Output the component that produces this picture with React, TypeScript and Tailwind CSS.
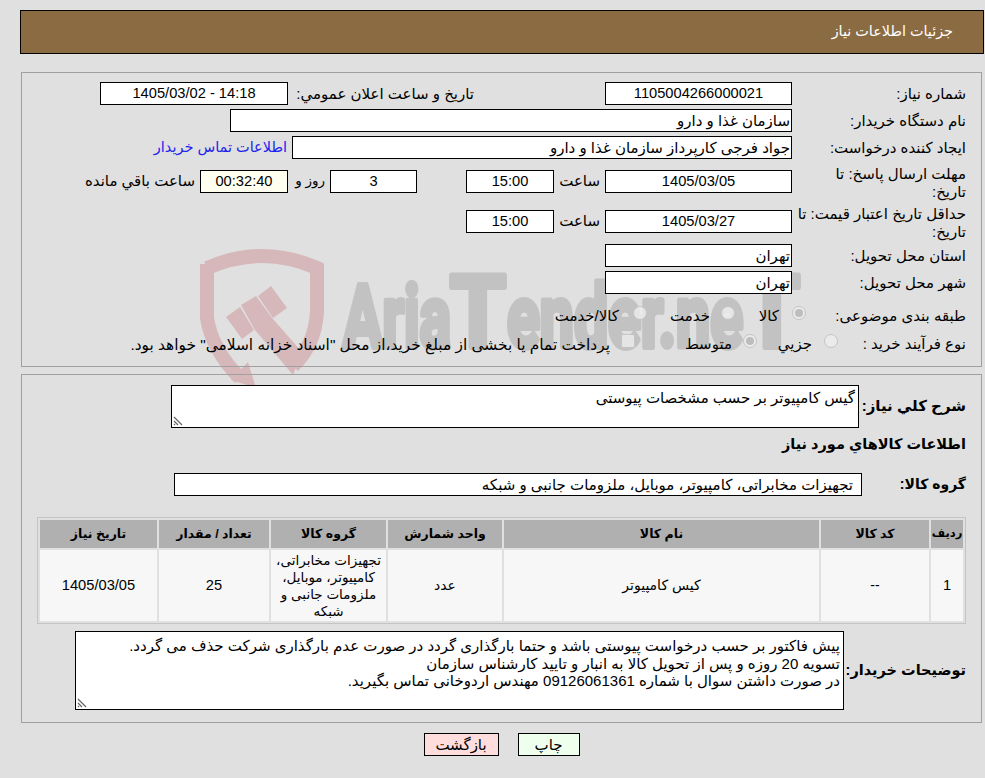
import React from 'react';

const Box = ({ className = '', children }: any) => (
  <div className={`h-[23px] shrink-0 border border-black bg-white flex items-center justify-center text-[14.67px] leading-none ${className}`}>
    {children}
  </div>
);

const TextBox = ({ className = '', children }: any) => (
  <div className={`h-[23px] shrink-0 border border-black bg-white flex items-center px-[1px] text-[15px] leading-none ${className}`}>
    {children}
  </div>
);

const Label = ({ className = 'w-[174px]', children }: any) => (
  <div className={`shrink-0 text-[15px] leading-[18px] ${className}`}>{children}</div>
);

const Hour = () => (
  <span className="mr-[5px] w-[42px] h-[23px] shrink-0 flex items-center text-[15px]">ساعت</span>
);

const Resize = () => (
  <svg className="absolute left-[1px] bottom-[1px]" width="10" height="10" viewBox="0 0 10 10">
    <path d="M1 1 L9 9 M1 5 L5 9 M1 8 L2 9" stroke="#666" strokeWidth="1.2" fill="none" />
  </svg>
);

const Radio = ({ checked }: any) => (
  <span className="w-[14px] h-[14px] shrink-0 -translate-y-[3px] rounded-full border border-[#c4c4c4] bg-[#ededed]/80 flex items-center justify-center">
    {checked && <span className="w-[8px] h-[8px] rounded-full bg-[#bdbdbd]" />}
  </span>
);

const Watermark = () => (
  <svg className="absolute left-0 top-0 [direction:ltr]" width="985" height="778" viewBox="0 0 985 778">
    <g fill="#d7b8ba">
      <path d="M207 268 Q262 244 317 268 L317 312 Q315 345 293 366" fill="none" stroke="#d7b8ba" strokeWidth="14" />
      <path d="M207 264 L207 318 Q212 350 240 378" fill="none" stroke="#d7b8ba" strokeWidth="14" />
      <polygon points="248,362 256,388 231,380" />
      <polygon points="271,286 287,308 273,318 258,296" />
      <polygon points="241,305 256,296 273,319 302,352 293,375 255,330" />
      <polygon points="226,317 240,307 254,330 242,339" />
    </g>
    <g fill="#c2c2c2" stroke="#c2c2c2" strokeWidth="6" strokeLinejoin="round" fontFamily="Roboto, sans-serif" fontWeight="700">
      <text direction="ltr" x="343" y="347" fontSize="88" textLength="108" lengthAdjust="spacingAndGlyphs">Aria</text>
      <text direction="ltr" x="450" y="347" fontSize="100" textLength="56" lengthAdjust="spacingAndGlyphs">T</text>
      <text direction="ltr" x="507" y="347" fontSize="88" textLength="236" lengthAdjust="spacingAndGlyphs">ender.ne</text>
      <text direction="ltr" x="744" y="347" fontSize="100" textLength="56" lengthAdjust="spacingAndGlyphs">T</text>
    </g>
  </svg>
);

const columns = [
  { title: 'رديف', className: 'w-[32px] text-[11.5px]' },
  { title: 'كد كالا', className: 'w-[108px] text-[12.5px]' },
  { title: 'نام كالا', className: 'w-[315px] text-[12.5px]' },
  { title: 'واحد شمارش', className: 'w-[114px] text-[12.5px]' },
  { title: 'گروه كالا', className: 'w-[115px] text-[12.5px]' },
  { title: 'تعداد / مقدار', className: 'w-[110px] text-[12.5px]' },
  { title: 'تاريخ نياز', className: 'w-[117px] text-[12.5px]' },
];

export default function App() {
  return (
    <div dir="rtl" className="relative min-h-[778px] overflow-hidden bg-[#e0e0e0] pt-[10px] font-['Liberation_Sans','DejaVu_Sans',sans-serif] text-black">
      <Watermark />
      <div className="relative">
        {/* Header */}
        <div className="ml-[20px] mr-[1px] h-[44px] border border-black bg-[#8b6c42] flex items-center pr-[30px] text-[14.4px] text-white">
          جزئيات اطلاعات نياز
        </div>

        {/* Main info */}
        <div className="ml-[21px] mr-[3px] mt-[18px] h-[295px] border border-[#a0a0a0] pt-[9px] pr-[15px]">
          <div className="flex items-center">
            <Label>شماره نياز:</Label>
            <Box className="w-[187px]">1105004266000021</Box>
            <Label className="w-[317px] pr-[131px]">تاريخ و ساعت اعلان عمومي:</Label>
            <Box className="w-[188px]">14:18 - 1405/03/02</Box>
          </div>
          <div className="flex items-center mt-[4px]">
            <Label>نام دستگاه خريدار:</Label>
            <TextBox className="w-[562px]">سازمان غذا و دارو</TextBox>
          </div>
          <div className="flex items-center mt-[4px]">
            <Label>ايجاد كننده درخواست:</Label>
            <TextBox className="w-[500px]">جواد فرجی کارپرداز سازمان غذا و دارو</TextBox>
            <a className="mr-[5px] text-[14.5px] text-[#2222ee] whitespace-nowrap">اطلاعات تماس خريدار</a>
          </div>
          <div className="flex items-start mt-[11px]">
            <Label className="w-[174px] pl-[20px] -mt-[5px]">مهلت ارسال پاسخ: تا تاريخ:</Label>
            <Box className="w-[187px]">1405/03/05</Box>
            <Hour />
            <Box className="mr-[4px] w-[88px]">15:00</Box>
            <span className="w-[49px] shrink-0" />
            <Box className="w-[87px]">3</Box>
            <span className="mr-[5px] w-[37px] h-[23px] shrink-0 flex items-center whitespace-nowrap text-[13.5px]">روز و</span>
            <Box className="w-[88px] bg-[#fffff0]!">00:32:40</Box>
            <span className="mr-[5px] h-[23px] flex items-center whitespace-nowrap text-[15px]">ساعت باقي مانده</span>
          </div>
          <div className="flex items-start mt-[9px]">
            <Label className="w-[174px] -mt-[5px]">حداقل تاريخ اعتبار قيمت: تا تاريخ:</Label>
            <Box className="w-[187px]">1405/03/27</Box>
            <Hour />
            <Box className="mr-[4px] w-[88px]">15:00</Box>
          </div>
          <div className="flex items-center mt-[3px]">
            <Label>استان محل تحويل:</Label>
            <TextBox className="w-[187px]">تهران</TextBox>
          </div>
          <div className="flex items-center mt-[4px]">
            <Label>شهر محل تحويل:</Label>
            <TextBox className="w-[187px]">تهران</TextBox>
          </div>
          <div className="flex items-center mt-[11px] text-[15px]">
            <Label className="w-[160px]">طبقه بندى موضوعى:</Label>
            <Radio checked />
            <span className="mr-[13px] w-[44px] shrink-0">كالا</span>
            <Radio />
            <span className="mr-[11px] w-[63px] shrink-0">خدمت</span>
            <Radio />
            <span className="mr-[14px] whitespace-nowrap">كالا/خدمت</span>
          </div>
          <div className="flex items-center mt-[5px] text-[15px]">
            <Label className="w-[128px]">نوع فرآيند خريد :</Label>
            <Radio />
            <span className="mr-[12px] w-[55px] shrink-0">جزيي</span>
            <Radio checked />
            <span className="mr-[11px] w-[97px] shrink-0">متوسط</span>
            <span className="w-[14px] h-[14px] shrink-0 -translate-y-[3px] rounded-[2px] border border-[#c4c4c4] bg-[#ededed]/80" />
            <span className="mr-[11px] whitespace-nowrap text-[15.4px]">پرداخت تمام يا بخشى از مبلغ خريد،از محل "اسناد خزانه اسلامى" خواهد بود.</span>
          </div>
        </div>

        {/* Description and items */}
        <div className="ml-[21px] mr-[3px] mt-[7px] h-[349px] border border-[#a0a0a0] pt-[10px] pr-[15px]">
          <div className="flex items-center">
            <div className="w-[107px] shrink-0 text-[15px] font-bold">شرح كلي نياز:</div>
            <div className="relative w-[688px] h-[43px] shrink-0 border border-black bg-white px-[3px] pt-[3px] text-[15px] leading-[18px]">
              گيس كامپيوتر بر حسب مشخصات پيوستى
              <Resize />
            </div>
          </div>
          <div className="mt-[5px] h-[20px] text-[14.5px] leading-[22px] font-bold">اطلاعات كالاهاي مورد نياز</div>
          <div className="flex items-center mt-[20px]">
            <div className="w-[104px] shrink-0 text-[14px] font-bold">گروه كالا:</div>
            <TextBox className="w-[688px] pr-[8px]">تجهيزات مخابراتى، كامپيوتر، موبايل، ملزومات جانبى و شبكه</TextBox>
          </div>
          <table className="mt-[21px] w-[928px] table-fixed border-separate border-spacing-[2px] border border-[#c4c4c4] text-center">
            <thead>
              <tr>
                {columns.map((c) => (
                  <th key={c.title} className={`${c.className} h-[28px] bg-[#b0b0b0] p-0 font-bold whitespace-nowrap`}>{c.title}</th>
                ))}
              </tr>
            </thead>
            <tbody>
              <tr className="bg-[#f7f7f7] text-[14px] leading-[17px]">
                <td className="h-[71px] p-0 text-[14.67px]">1</td>
                <td className="p-0">--</td>
                <td className="p-0">كيس كامپيوتر</td>
                <td className="p-0">عدد</td>
                <td className="p-0 px-[2px] text-[13.5px]">تجهيزات مخابراتى، كامپيوتر، موبايل، ملزومات جانبى و شبكه</td>
                <td className="p-0 text-[14.67px]">25</td>
                <td className="p-0 text-[14.67px]">1405/03/05</td>
              </tr>
            </tbody>
          </table>
          <div className="flex items-center mt-[7px]">
            <div className="w-[122px] shrink-0 whitespace-nowrap text-[14.5px] font-bold">توضيحات خريدار:</div>
            <div className="relative w-[769px] h-[79px] shrink-0 border border-black bg-white px-[3px] pt-[5px] text-[15px] leading-[17.5px]">
              <div>پيش فاكتور بر حسب درخواست پيوستى باشد و حتما بارگذارى گردد در صورت عدم بارگذارى شركت حذف مى گردد.</div>
              <div>تسويه 20 روزه و پس از تحويل كالا به انبار و تاييد كارشناس سازمان</div>
              <div>در صورت داشتن سوال با شماره 09126061361 مهندس اردوخانى تماس بگيريد.</div>
              <Resize />
            </div>
          </div>
        </div>

        {/* Buttons */}
        <div className="mt-[10px] flex justify-center gap-[19px] pl-[18px]">
          <button className="w-[62px] h-[23px] border border-black bg-[#eeffee] text-[15px]">چاپ</button>
          <button className="w-[75px] h-[23px] border border-black bg-[#ffdddd] text-[15px]">بازگشت</button>
        </div>
      </div>
    </div>
  );
}
